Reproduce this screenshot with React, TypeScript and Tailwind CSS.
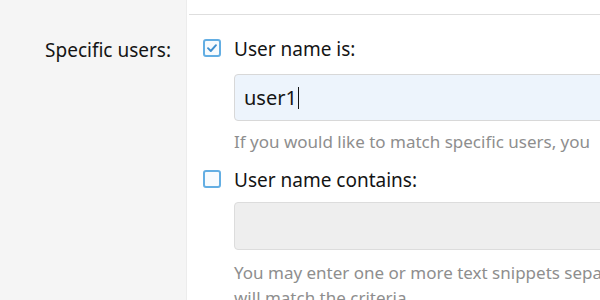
import React from "react";

function Check({ checked }: { checked: boolean }) {
  return (
    <span className="mt-[3px] flex h-[18px] w-[18px] shrink-0 items-center justify-center rounded-[3px] border-2 border-[#63aee3] bg-[#f7fbfe]">
      {checked && (
        <svg width="12" height="12" viewBox="0 0 12 12">
          <path d="M2 6.2 L4.8 9 L10 3.2" fill="none" stroke="#3f8fcf" strokeWidth="1.9" strokeLinecap="round" strokeLinejoin="round" />
        </svg>
      )}
    </span>
  );
}

export default function App() {
  return (
    <div
      className="flex h-[300px] w-[600px] overflow-hidden bg-white text-[#141414]"
      style={{ fontFamily: '"Noto Sans", "Open Sans", sans-serif' }}
    >
      <div className="w-[187px] shrink-0 border-r border-[#ececec] bg-[#f5f5f5] pr-[15px] pt-[37px] text-right text-[19px] leading-[26px] whitespace-nowrap">
        Specific users:
      </div>
      <div className="min-w-0 flex-1 overflow-hidden">
        <div className="ml-[2px] h-[15px] border-b border-[#dedede]" />
        <div className="pl-[16px] pt-[21px]">
          <div className="flex items-start gap-[13px]">
            <Check checked />
            <span className="whitespace-nowrap text-[19px] leading-[26px]">User name is:</span>
          </div>
          <div className="ml-[31px] mt-[12px] flex h-[47px] w-[400px] items-center rounded-[4px] border border-[#d8d8d8] bg-[#edf4fc] pl-[9px] text-[20px]">
            <span>user1</span>
            <span className="ml-[1px] h-[22px] w-[1.5px] bg-[#141414]" />
          </div>
          <div className="ml-[31px] mt-[10px] whitespace-nowrap text-[17px] leading-[22px] text-[#8e8e8e]">
            If you would like to match specific users, you
          </div>
          <div className="mt-[14px] flex items-start gap-[13px]">
            <Check checked={false} />
            <span className="whitespace-nowrap text-[19px] leading-[26px]">User name contains:</span>
          </div>
          <div className="ml-[31px] mt-[9px] h-[48px] w-[400px] rounded-[4px] border border-[#dcdcdc] bg-[#eeeeee]" />
          <div className="ml-[31px] mt-[10px] whitespace-nowrap text-[17px] leading-[25px] text-[#8e8e8e]">
            <div>You may enter one or more text snippets separated by commas. Any</div>
            <div>will match the criteria.</div>
          </div>
        </div>
      </div>
    </div>
  );
}
